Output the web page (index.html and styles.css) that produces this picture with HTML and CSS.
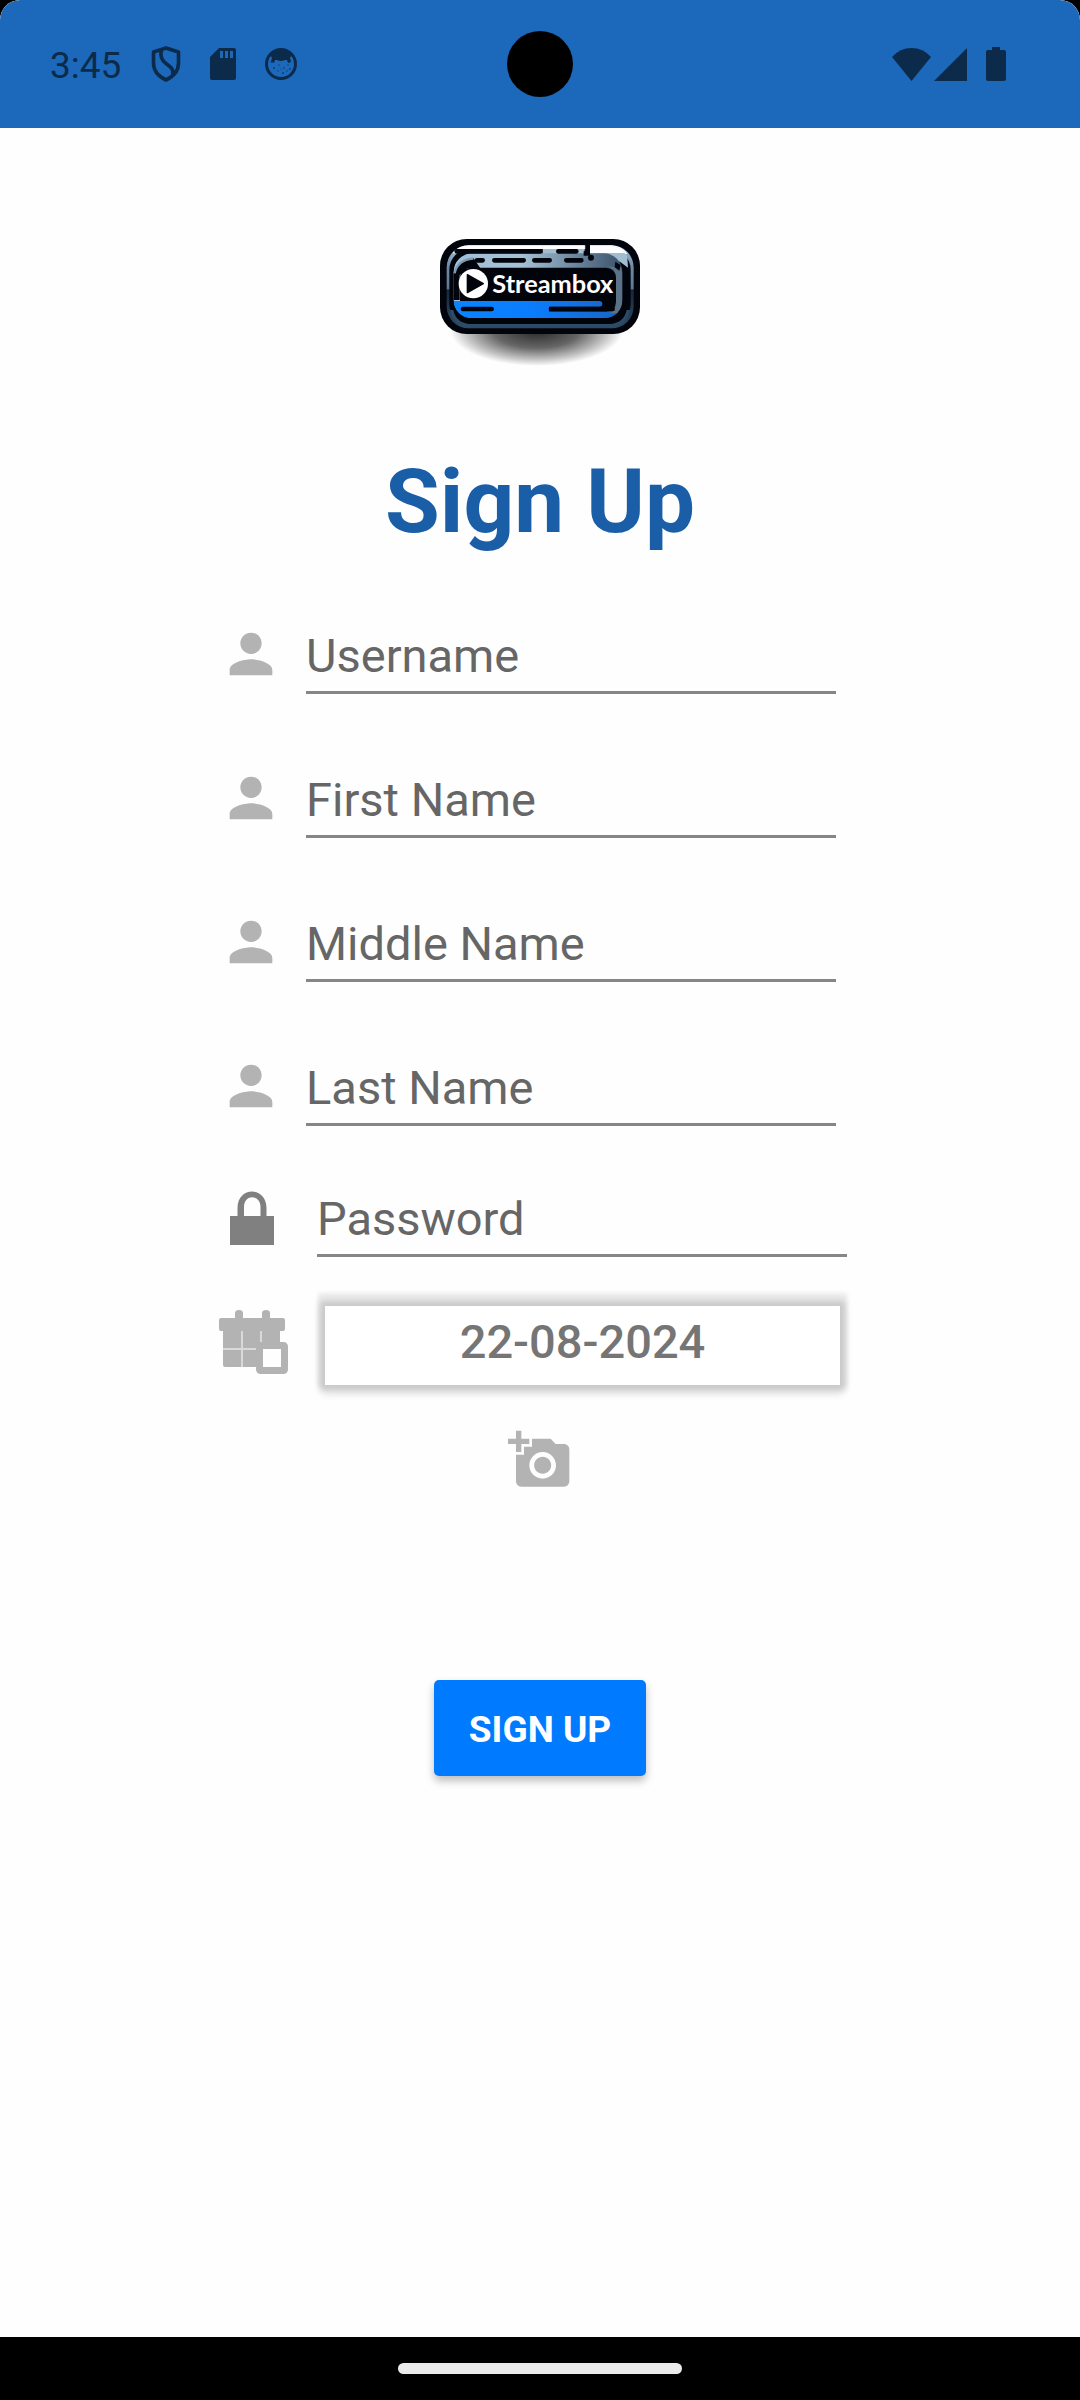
FILE: index.html
```html
<!DOCTYPE html>
<html lang="en">
<head>
<meta charset="utf-8">
<meta name="viewport" content="width=device-width, initial-scale=1">
<title>Streambox – Sign Up</title>
<link rel="stylesheet" href="styles.css">
</head>
<body>
<svg width="0" height="0" class="sprite" aria-hidden="true">
  <symbol id="person" viewBox="0 0 24 24"><path d="M12 12c2.21 0 4-1.79 4-4s-1.79-4-4-4-4 1.79-4 4 1.79 4 4 4zm0 2c-2.67 0-8 1.34-8 4v2h16v-2c0-2.660-5.330-4-8-4z"/></symbol>
</svg>

<header class="status-bar">
  <div class="status-left">
    <span class="clock">3:45</span>
    <svg class="shield" viewBox="0 0 30 36" aria-hidden="true">
      <path d="M15 2 27.500 6v11c0 8-5 13.500-12.500 17C7.500 30.500 2.500 25 2.500 17V6z M10.500 4c-2 7 .5 10.500 4.500 13.500 5.500 4 8 6 6.500 11.500" fill="none" stroke="currentColor" stroke-width="3.600" stroke-linejoin="round"/>
    </svg>
    <svg class="sd" viewBox="0 0 26 32" aria-hidden="true">
      <path fill-rule="evenodd" d="M9 0h15q2 0 2 2v28q0 2-2 2H2q-2 0-2-2V9zM10 3v7h3V3zm5 0v7h3V3zm5 0v7h3V3z" fill="currentColor"/>
    </svg>
    <svg class="face" viewBox="0 0 32 32" aria-hidden="true">
      <circle cx="16" cy="16" r="14.500" fill="none" stroke="currentColor" stroke-width="3"/>
      <path d="M4 8C8 0 24 0 28 8l-3 1 1 5-3 1-1-3-2 0q-4 2-8 0l-2 0-1 3-3-1 1-5z" fill="currentColor"/>
      <g fill="currentColor" opacity=".7"><circle cx="6" cy="14" r=".7"/><circle cx="9" cy="20" r=".9"/><circle cx="14" cy="17" r=".7"/><circle cx="19" cy="20" r=".8"/><circle cx="13" cy="23" r=".7"/><circle cx="18" cy="25" r=".9"/><circle cx="23" cy="17" r=".7"/><circle cx="25" cy="21" r=".9"/><circle cx="16" cy="21" r=".6"/><circle cx="22" cy="23" r=".7"/></g>
    </svg>
  </div>
  <div class="camera-hole"></div>
  <div class="status-right">
    <svg class="wifi" viewBox="0 0 39 33" aria-hidden="true"><path d="M0 9Q8 0 19.500 0T39 9L19.500 33z" fill="currentColor"/></svg>
    <svg class="signal" viewBox="0 0 33 33" aria-hidden="true"><path d="M33 0v33H0z" fill="currentColor"/></svg>
    <svg class="battery" viewBox="0 0 20 34" aria-hidden="true"><path d="M6 0h8v3h4q2 0 2 2v27q0 2-2 2H2q-2 0-2-2V5q0-2 2-2h4z" fill="currentColor"/></svg>
  </div>
</header>

<main>
  <svg class="logo" viewBox="0 0 720 480" role="img" aria-label="Streambox">
    <defs>
      <linearGradient id="steel" x1="0" y1="0" x2="0" y2="1"><stop offset="0" stop-color="#a9c4d8"/><stop offset=".25" stop-color="#6d8ba6"/><stop offset=".52" stop-color="#5c7a94"/><stop offset=".54" stop-color="#16283c"/><stop offset="1" stop-color="#2d4a66"/></linearGradient>
      <linearGradient id="sky" x1="0" y1="0" x2="1" y2="0"><stop offset="0" stop-color="#9fc0d8"/><stop offset=".4" stop-color="#a4c1d6"/><stop offset="1" stop-color="#3a526b"/></linearGradient>
      <linearGradient id="blue" x1="0" y1="0" x2="1" y2="0"><stop offset="0" stop-color="#0a84ff"/><stop offset=".45" stop-color="#0a7dff"/><stop offset="1" stop-color="#1a64c4"/></linearGradient>
      <radialGradient id="shade"><stop offset="0" stop-color="#000" stop-opacity=".85"/><stop offset=".5" stop-color="#000" stop-opacity=".6"/><stop offset=".8" stop-color="#000" stop-opacity=".25"/><stop offset="1" stop-color="#000" stop-opacity="0"/></radialGradient>
      <clipPath id="screen"><rect x="101" y="112" width="506" height="182" rx="52"/></clipPath>
    </defs>
    <ellipse cx="350" cy="330" rx="260" ry="108" fill="url(#shade)"/>
    <rect x="60" y="57" width="600" height="285" rx="80" fill="#02040c"/>
    <rect x="80" y="76" width="561" height="249" rx="66" fill="url(#steel)"/>
    <path d="M98 100q16-24 50-24h346v24zM510 76h66q32 4 46 26H510z" fill="#fff"/>
    <rect x="88" y="87" width="544" height="226" rx="62" fill="#02040c"/>
    <path d="M104 300q-12-10-14-30l10 0q8 38 48 42h424q40-4 48-42l10 0q-8 40-44 52H130q-16-6-26-22z" fill="#2d4a66"/>
    <path d="M368 77h126v25H368zM510 77h60q42 6 52 36l2 30-24-18-90-16z" fill="#a3bdd0"/>
    <path d="M368 77h126v10H368zM510 77h60q32 4 44 22H510z" fill="#fff"/>
    <rect x="101" y="100" width="506" height="194" rx="56" fill="url(#sky)"/>
    <rect x="120" y="143" width="468" height="132" rx="30" fill="#02040c"/>
    <path d="M101 165q12-42 60-50l20 30h-40l-22 20v75h-18z" fill="#02040c"/>
    <path d="M104 160q8-40 56-44" fill="none" stroke="#7d99b0" stroke-width="7"/>
    <g clip-path="url(#screen)">
      <path d="M101 243h436q10 0 10 8 0 9-10 9h-150v15h220v22H101z" fill="url(#blue)"/>
      <path d="M588 165q-5-20-25-25h44v140h-40q21-8 21-30z" fill="#5c7286"/>
    </g>
    <g stroke="#02040c" stroke-width="14" stroke-linecap="round" fill="none">
      <path d="M110 94H361M415 94h54M171 121h17M223 121h88M343 121h46M439 121h45"/>
      <path d="M129 267h86M393 267h185"/>
      <path d="M503 62v38h-12" stroke-linecap="butt"/>
    </g>
    <circle cx="513" cy="113" r="9" fill="#02040c"/>
    <path d="M586 125l16 10-4 17-14-10z" fill="#02040c"/>
    <circle cx="160" cy="191" r="44" fill="#fff"/>
    <path d="M142 164l48 27-48 27z" fill="#02040c" stroke="#02040c" stroke-width="4" stroke-linejoin="round"/>
    <text x="217" y="218" class="wordmark">Streambox</text>
  </svg>

  <h1>Sign Up</h1>

  <form>
    <div class="names">
      <div class="row"><svg class="icon" aria-hidden="true"><use href="#person"/></svg><input type="text" placeholder="Username" aria-label="Username"></div>
      <div class="row"><svg class="icon" aria-hidden="true"><use href="#person"/></svg><input type="text" placeholder="First Name" aria-label="First Name"></div>
      <div class="row"><svg class="icon" aria-hidden="true"><use href="#person"/></svg><input type="text" placeholder="Middle Name" aria-label="Middle Name"></div>
      <div class="row"><svg class="icon" aria-hidden="true"><use href="#person"/></svg><input type="text" placeholder="Last Name" aria-label="Last Name"></div>
    </div>
    <div class="row wide password">
      <svg class="icon-wide lock" viewBox="0 0 70 70" aria-hidden="true"><path fill-rule="evenodd" d="M11 31h7.500V23c0-22 29-22 29 0v8H55v29H11zM25 31h16.500V22c0-13-16.500-13-16.500 0z"/></svg>
      <input type="password" placeholder="Password" aria-label="Password">
    </div>
    <div class="row wide date">
      <svg class="icon-wide" viewBox="0 0 70 70" aria-hidden="true">
        <path d="M0 14q0-2 2-2h14V7q0-3 4-3t4 3v5h19V7q0-3 4-3t4 3v5h13q2 0 2 2v9q0 2-2 2H2q-2 0-2-2z"/>
        <path d="M4 25h57v15H41v21H6q-2 0-2-2z"/>
        <path d="M23 25v36M42 25v14M4 43h34" fill="none" stroke="#d9d9d9" stroke-width="2"/>
        <rect x="40.500" y="39.500" width="25" height="25" rx="1" fill="#fefefe" stroke="#b3b3b3" stroke-width="7"/>
      </svg>
      <button type="button" class="date-button">22-08-2024</button>
    </div>
    <button type="button" class="photo" aria-label="Add a photo">
      <svg class="icon" viewBox="0 0 24 24" aria-hidden="true"><path fill-rule="evenodd" d="M3 4V1h2v3h3v2H5v3H3V6H0V4zm3 6V7h3V4h7l1.830 2H21c1.100 0 2 .9 2 2v12c0 1.100-.9 2-2 2H5c-1.100 0-2-.9-2-2V10zm7 9c2.760 0 5-2.240 5-5s-2.240-5-5-5-5 2.240-5 5 2.240 5 5 5zm-3.200-5c0 1.770 1.430 3.200 3.200 3.200s3.200-1.430 3.200-3.200-1.430-3.200-3.200-3.200-3.200 1.430-3.200 3.200z"/></svg>
    </button>
    <button type="submit" class="submit">SIGN UP</button>
  </form>
</main>

<footer class="nav-bar"><div class="pill"></div></footer>
</body>
</html>
```
FILE: styles.css
```css
* { box-sizing: border-box; }

html { background: #000; }

body {
  margin: 0;
  min-height: 100vh;
  display: flex;
  flex-direction: column;
  overflow-x: hidden;
  border-radius: 20px 20px 0 0;
  background: #fefefe;
  font-family: Roboto, "Liberation Sans", sans-serif;
}

.sprite { position: absolute; }

svg { display: block; flex: none; }

button, input {
  font: inherit;
  margin: 0;
  border: 0;
  border-radius: 0;
  background: none;
}

.status-bar {
  height: 128px;
  display: grid;
  grid-template-columns: 1fr 66px 1fr;
  align-items: center;
  padding: 0 50px;
  border-radius: 20px 20px 0 0;
  background: #1c68ba;
  color: #0c2b4a;
}

.status-left, .status-right { display: flex; align-items: center; }
.status-right { justify-content: flex-end; padding-right: 24px; }
.clock { font-size: 37px; line-height: 44px; margin-right: 30px; padding-top: 4px; }
.shield { width: 30px; height: 36px; margin-right: 29px; }
.sd { width: 26px; height: 32px; margin-right: 29px; }
.face { width: 32px; height: 32px; }
.camera-hole { height: 66px; border-radius: 50%; background: #000; }
.wifi { width: 39px; height: 33px; margin-right: 3px; }
.signal { width: 33px; height: 33px; margin-right: 19px; }
.battery { width: 20px; height: 34px; }

main {
  flex: 1;
  display: flex;
  flex-direction: column;
  align-items: center;
  padding: 92px 16px 48px;
}

.logo { width: 240px; height: 160px; }
.wordmark { font: 700 76px Lato, sans-serif; fill: #fff; }

h1 {
  margin: 70px 0 68px;
  font-size: 89px;
  line-height: 104px;
  font-weight: 700;
  color: #1a5ea8;
}

form {
  width: 100%;
  max-width: 642px;
  display: flex;
  flex-direction: column;
  align-items: center;
}

.names { width: 100%; display: flex; flex-direction: column; gap: 72px; }

.row {
  width: 100%;
  display: flex;
  gap: 23px;
  padding-right: 25px;
  fill: #b3b3b3;
}
.wide { gap: 28px; padding-right: 14px; }
.password { margin-top: 59px; }
.date { margin-top: 49px; }

.icon { width: 64px; height: 64px; fill: #b3b3b3; }
.icon-wide { width: 70px; height: 70px; }
.lock { fill: #808080; }

input {
  flex: 1;
  min-width: 0;
  height: 72px;
  padding: 6px 2px 8px 0;
  border-bottom: 3px solid #868686;
  font-size: 47px;
  line-height: 55px;
  color: #222;
}
input::placeholder { color: #666; opacity: 1; }

.date-button {
  flex: 1;
  margin: 0 7px 0 8px;
  padding: 8px 0 16px;
  background: #fff;
  box-shadow: 0 0 6px 5px #c8c8c8, 0 -6px 4px 7px #ebebeb, 0 6px 8px 3px #e6e6e6;
  font-size: 47px;
  line-height: 55px;
  font-weight: 500;
  color: #757575;
}

.photo { margin-top: 43px; padding: 0; }

.submit {
  margin-top: 188px;
  padding: 28px 35px 24px;
  border-radius: 5px;
  background: #007bff;
  box-shadow: 0 5px 9px rgba(0, 0, 0, .26);
  font-size: 37px;
  line-height: 44px;
  font-weight: 700;
  color: #fff;
}

.nav-bar {
  height: 63px;
  display: flex;
  align-items: center;
  justify-content: center;
  background: #000;
}
.pill { width: 284px; height: 11px; border-radius: 6px; background: #ebebeb; }
```
